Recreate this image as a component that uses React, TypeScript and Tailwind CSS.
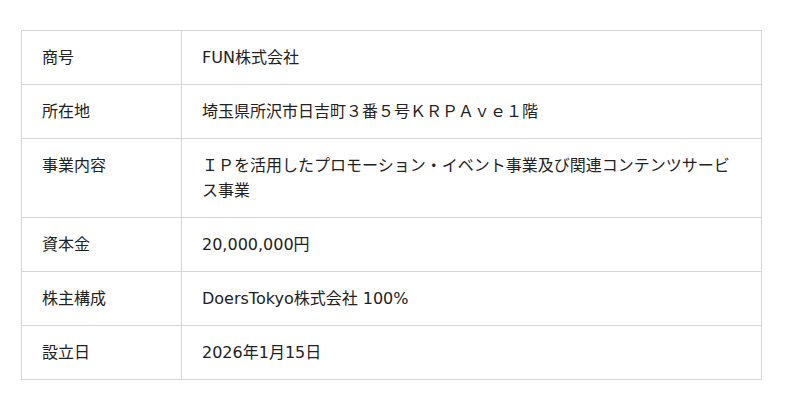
const rows: { label: string; value: string }[] = [
  { label: '商号', value: 'FUN株式会社' },
  { label: '所在地', value: '埼玉県所沢市日吉町３番５号ＫＲＰＡｖｅ１階' },
  {
    label: '事業内容',
    value: 'ＩＰを活用したプロモーション・イベント事業及び関連コンテンツサービス事業',
  },
  { label: '資本金', value: '20,000,000円' },
  { label: '株主構成', value: 'DoersTokyo株式会社 100%' },
  { label: '設立日', value: '2026年1月15日' },
];

export default function App() {
  return (
    <div
      className="min-h-screen w-[800px] bg-white pt-[30px] pl-[21px] text-[16px] leading-[25px] text-[#222]"
      style={{ fontFamily: '"DejaVu Sans", "Noto Sans CJK JP", sans-serif' }}
    >
      {/* Company profile table */}
      <div className="w-[741px] border border-[#d6d6d6]">
        {rows.map((row, i) => (
          <div
            key={row.label}
            className={
              i < rows.length - 1 ? 'flex border-b border-[#d6d6d6]' : 'flex'
            }
          >
            <div className="w-[160px] shrink-0 border-r border-[#d6d6d6] px-[20px] py-[14px]">
              {row.label}
            </div>
            <div className="flex-1 px-[20px] py-[14px]">{row.value}</div>
          </div>
        ))}
      </div>
    </div>
  );
}
